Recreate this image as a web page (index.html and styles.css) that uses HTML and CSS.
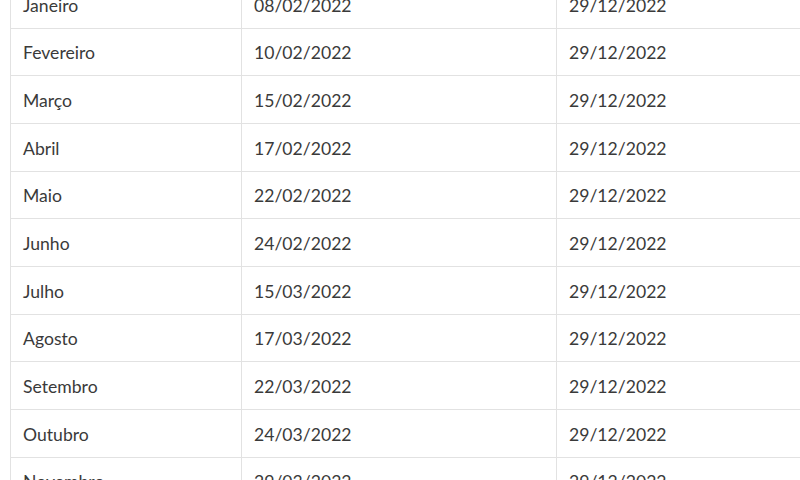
FILE: index.html
```html
<!DOCTYPE html>
<html lang="pt">
<head>
<meta charset="utf-8">
<link rel="stylesheet" href="styles.css">
</head>
<body>
<div class="viewport">
  <table class="schedule">
    <colgroup>
      <col class="c1"><col class="c2"><col class="c3">
    </colgroup>
    <tbody>
      <tr><td>Janeiro</td><td>08/02/2022</td><td>29/12/2022</td></tr>
      <tr><td>Fevereiro</td><td>10/02/2022</td><td>29/12/2022</td></tr>
      <tr><td>Março</td><td>15/02/2022</td><td>29/12/2022</td></tr>
      <tr><td>Abril</td><td>17/02/2022</td><td>29/12/2022</td></tr>
      <tr><td>Maio</td><td>22/02/2022</td><td>29/12/2022</td></tr>
      <tr><td>Junho</td><td>24/02/2022</td><td>29/12/2022</td></tr>
      <tr><td>Julho</td><td>15/03/2022</td><td>29/12/2022</td></tr>
      <tr><td>Agosto</td><td>17/03/2022</td><td>29/12/2022</td></tr>
      <tr><td>Setembro</td><td>22/03/2022</td><td>29/12/2022</td></tr>
      <tr><td>Outubro</td><td>24/03/2022</td><td>29/12/2022</td></tr>
      <tr><td>Novembro</td><td>29/03/2022</td><td>29/12/2022</td></tr>
    </tbody>
  </table>
</div>
</body>
</html>
```
FILE: styles.css
```css
html, body {
  margin: 0;
  padding: 0;
  background: #fff;
}
.viewport {
  width: 800px;
  height: 480px;
  overflow: hidden;
  padding-left: 10px;
  box-sizing: border-box;
}
.schedule {
  margin-top: -20px;
  border-collapse: collapse;
  table-layout: fixed;
  width: 840px;
  font-family: Lato, "Liberation Sans", sans-serif;
  font-size: 17.6px;
  color: #3a3a3a;
}
.c1 { width: 231px; }
.c2 { width: 315px; }
.c3 { width: 294px; }
.schedule td {
  height: 47.67px;
  box-sizing: border-box;
  padding: 2px 12px 0 12px;
  border: 1px solid #e2e2e2;
  vertical-align: middle;
}
```
